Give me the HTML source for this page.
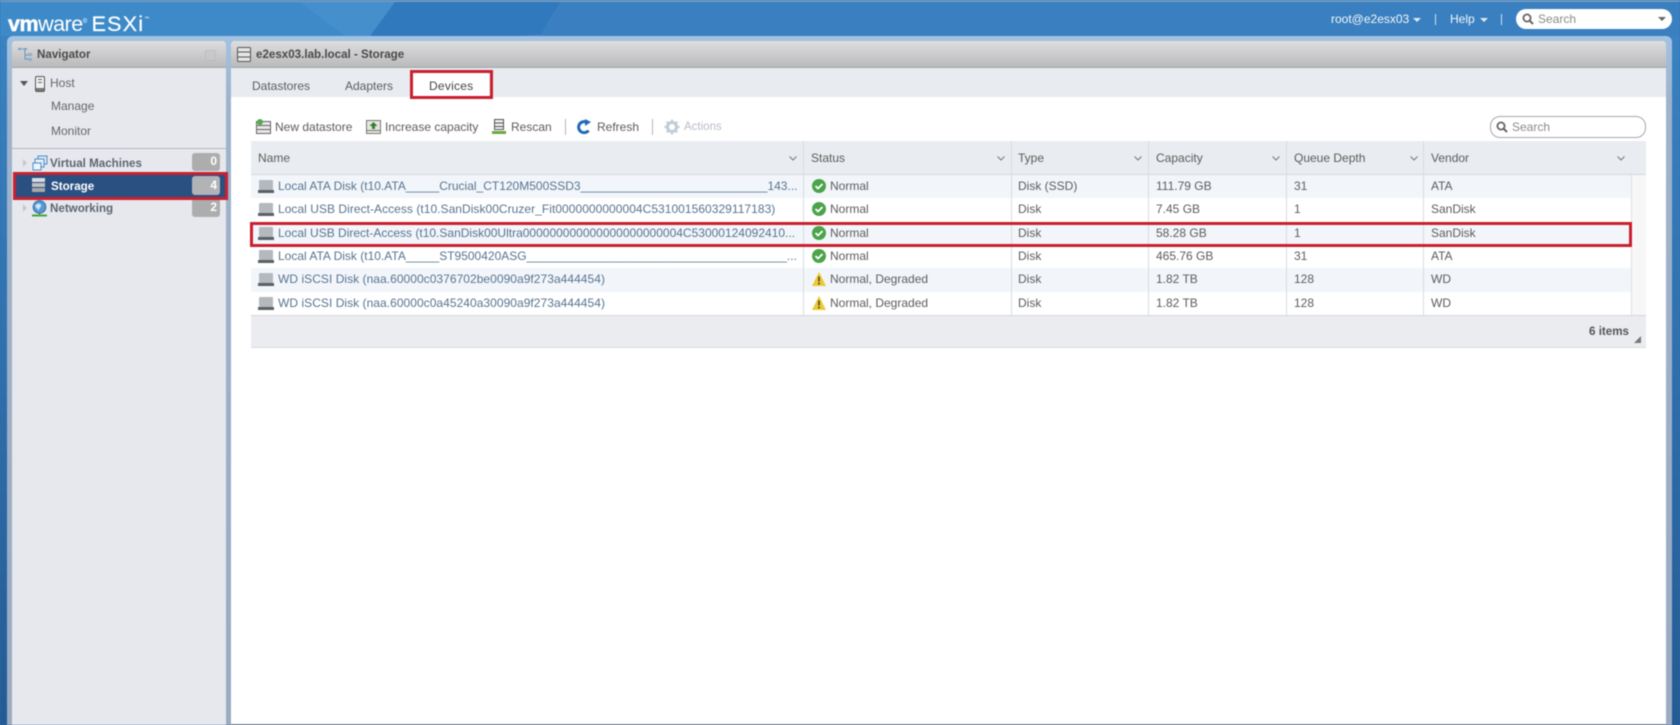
<!DOCTYPE html>
<html lang="en">
<head>
<meta charset="utf-8">
<title>e2esx03.lab.local - Storage</title>
<style>
html,body{margin:0;padding:0;width:1680px;height:725px;overflow:hidden;background:#2f6ca8}
#r{position:relative;width:1680px;height:725px;overflow:hidden;font-family:"Liberation Sans",Arial,sans-serif;font-size:12px;color:#5c5c5c;filter:blur(.4px)}
.a{position:absolute}
.t{position:absolute;white-space:nowrap;line-height:14px;height:14px}
.b{font-weight:bold;font-size:11.6px}
.n{color:#587491}
.s{letter-spacing:.04px}
.rw{position:absolute;left:251px;width:1380px;height:23.33px}
.vs{position:absolute;width:1px;background:#d8dce2}
svg{position:absolute;overflow:visible}
.red{position:absolute;border:3px solid #c9202f;box-sizing:border-box}
.bd{position:absolute;left:192px;width:28px;background:#adadad;border-radius:3px;color:#fff;font-weight:bold;text-align:right;box-sizing:border-box;padding-right:3px}
</style>
</head>
<body>
<div id="r">
<!-- top bar -->
<div class="a" style="left:0;top:0;width:1680px;height:725px;background:linear-gradient(#3a82c2 0,#3a82c2 40px,#245b94 100%)"></div>
<div class="a" style="left:0;top:0;width:1680px;height:2px;background:#6f9cc4"></div>
<svg style="left:0;top:2px" width="1680" height="34">
<polygon points="0,0 300,0 380,34 0,34" fill="#3e8ac9"/>
<polygon points="300,0 395,0 370,34 345,34" fill="#468fcd"/>
<polygon points="395,0 900,0 520,34 370,34" fill="#3079bd"/>
<polygon points="560,0 1680,0 1680,34 540,34" fill="#3a80c0"/>
</svg>
<div class="a" style="left:7px;top:36px;width:1665px;height:689px;background:linear-gradient(#a3c3e2 0,#9fb4cc 60px,#9aabc2 100%);border-radius:6px 6px 0 0"></div>
<!-- logo -->
<div class="t" style="left:8px;top:7px;height:24px;line-height:24px;font-size:21.500px;color:#fff;letter-spacing:-.5px"><span style="font-weight:bold;-webkit-text-stroke:.5px #fff">vm</span><span style="font-weight:normal">ware</span><span style="font-size:6px;vertical-align:8px">®</span><span style="font-size:21.500px;letter-spacing:1.200px;margin-left:5px;-webkit-text-stroke:.2px #fff">ESXi</span><span style="font-size:5px;vertical-align:11px">™</span></div>
<!-- top right -->
<div class="t" style="left:1331px;top:12px;color:#f2f6fa">root@e2esx03</div>
<svg style="left:1413px;top:18px" width="8" height="5"><path d="M0 0h8L4 4z" fill="#dfe9f3"/></svg>
<div class="a" style="left:1435px;top:14px;width:1px;height:11px;background:#cfe0f0"></div>
<div class="t" style="left:1450px;top:12px;color:#f2f6fa">Help</div>
<svg style="left:1480px;top:18px" width="8" height="5"><path d="M0 0h8L4 4z" fill="#dfe9f3"/></svg>
<div class="a" style="left:1501px;top:14px;width:1px;height:11px;background:#cfe0f0"></div>
<div class="a" style="left:1516px;top:9px;width:156px;height:20px;background:#fff;border-radius:10px"></div>
<svg style="left:1522px;top:13px" width="12" height="12"><circle cx="5" cy="5" r="3.6" fill="none" stroke="#666" stroke-width="1.8"/><path d="M7.5 7.5L11 11" stroke="#666" stroke-width="2"/></svg>
<div class="t" style="left:1538px;top:12px;color:#8a8a8a">Search</div>
<svg style="left:1658px;top:17px" width="8" height="5"><path d="M0 0h8L4 4z" fill="#666"/></svg>

<!-- navigator -->
<div class="a" style="left:12px;top:41px;width:214px;height:684px;background:#e6e8ee;border-radius:4px 4px 0 0"></div>
<div class="a" style="left:12px;top:41px;width:214px;height:27px;background:linear-gradient(#dedede,#b9babc);border-radius:4px 4px 0 0;border-bottom:1px solid #a5a7aa;box-sizing:border-box"></div>
<svg style="left:17px;top:47px" width="16" height="16"><path d="M1 1h4v2H1zM6 1h4v2H6z" fill="#7ea4c8"/><path d="M8 3v9h3M8 8h3" stroke="#6a93b8" fill="none"/><rect x="11" y="6" width="4" height="3" fill="#8fb0cf"/><rect x="11" y="11" width="4" height="3" fill="#8fb0cf"/></svg>
<div class="t b" style="left:37px;top:48px;color:#4a4a4a">Navigator</div>
<div class="a" style="left:205px;top:50px;width:9px;height:9px;border:1px solid #b8b8b8;background:#c8c8c8;opacity:.7"></div>
<svg style="left:20px;top:81px" width="8" height="5"><path d="M0 0h8L4 5z" fill="#555"/></svg>
<svg style="left:35px;top:76px" width="10" height="16"><rect x=".5" y=".5" width="9" height="15" rx="1.5" fill="#eef0f2" stroke="#555"/><rect x="3" y="3" width="4" height="1" fill="#666"/><rect x="3" y="6" width="4" height="1" fill="#666"/><rect x="1" y="12" width="8" height="3" fill="#777"/></svg>
<div class="t" style="left:50px;top:76px;color:#666">Host</div>
<div class="t" style="left:51px;top:99px;color:#666">Manage</div>
<div class="t" style="left:51px;top:124px;color:#666">Monitor</div>
<div class="a" style="left:12px;top:148px;width:214px;height:1px;background:#b3b6ba"></div>
<svg style="left:23px;top:159px" width="5" height="8"><path d="M0 0l4 4-4 4z" fill="#c5c8cc"/></svg>
<svg style="left:32px;top:155px" width="16" height="16"><rect x="6" y="1" width="9" height="8" fill="#dbe9f5" stroke="#4b8cc4"/><rect x="3" y="4" width="9" height="8" fill="#e5f0f9" stroke="#4b8cc4"/><rect x="1" y="8" width="8" height="7" fill="#eef5fb" stroke="#4b8cc4"/></svg>
<div class="t b" style="left:50px;top:157px;color:#5d6670">Virtual Machines</div>
<div class="bd" style="top:153px;height:18px;line-height:17px">0</div>
<div class="a" style="left:14px;top:175px;width:212px;height:22px;background:#2a5082"></div>
<svg style="left:32px;top:178px" width="13" height="15"><rect width="13" height="4" fill="#dcdcdc"/><rect y="5" width="13" height="4" fill="#c0c0c0"/><rect y="10" width="13" height="4" fill="#a8a8a8"/></svg>
<div class="t b" style="left:51px;top:180px;color:#fff">Storage</div>
<div class="bd" style="top:176px;height:19px;line-height:19px;background:#b1b3b6">4</div>
<svg style="left:23px;top:204px" width="5" height="8"><path d="M0 0l4 4-4 4z" fill="#c5c8cc"/></svg>
<svg style="left:31px;top:200px" width="17" height="17"><circle cx="8.5" cy="7" r="6.3" fill="#5a9ad4" stroke="#2a6aa8"/><path d="M4 6c2-3 5-3 6-1s-3 3-2 6" fill="#cfe4f5"/><path d="M8.5 13v2" stroke="#555"/><rect x="1" y="14.5" width="15" height="2" fill="#47a53a"/></svg>
<div class="t b" style="left:50px;top:202px;color:#5d6670">Networking</div>
<div class="bd" style="top:198px;height:19px;line-height:19px">2</div>

<!-- main panel -->
<div class="a" style="left:231px;top:41px;width:1435px;height:683px;background:#fff;border-radius:4px 4px 0 0"></div>
<div class="a" style="left:231px;top:724px;width:1435px;height:1px;background:#8e8e8e"></div>
<div class="a" style="left:231px;top:41px;width:1435px;height:27px;background:linear-gradient(#dedede,#b9babc);border-radius:4px 4px 0 0;border-bottom:1px solid #a5a7aa;box-sizing:border-box"></div>
<svg style="left:237px;top:47px" width="14" height="15"><rect x=".5" y=".5" width="13" height="14" rx="1" fill="#e4e4e4" stroke="#555"/><path d="M1 5h12M1 10h12" stroke="#555"/></svg>
<div class="t b" style="left:256px;top:48px;color:#4a4a4a">e2esx03.lab.local - Storage</div>
<div class="a" style="left:231px;top:68px;width:1435px;height:29px;background:#e8ecf1"></div>
<div class="a" style="left:412px;top:73px;width:77px;height:24px;background:#fff;border-radius:3px 3px 0 0"></div>
<div class="t" style="left:252px;top:79px">Datastores</div>
<div class="t" style="left:345px;top:79px">Adapters</div>
<div class="t" style="left:429px;top:79px;color:#444;letter-spacing:.25px">Devices</div>
<div class="red" style="left:410px;top:70px;width:83px;height:29px"></div>

<!-- toolbar -->
<svg style="left:256px;top:119px" width="16" height="15"><rect x=".5" y="2.5" width="14" height="12" fill="#e8e8e8" stroke="#666"/><path d="M1 6.5h13M1 10.500h13" stroke="#666"/><circle cx="4" cy="3" r="3" fill="#4fae45"/></svg>
<div class="t" style="left:275px;top:120px">New datastore</div>
<svg style="left:366px;top:120px" width="15" height="14"><rect x=".5" y=".5" width="14" height="13" fill="#e2e8de" stroke="#777"/><path d="M7.500 2l4 4H9v3H6V6H3.500z" fill="#3d7a34"/><path d="M1 10.500h13" stroke="#777"/></svg>
<div class="t" style="left:385px;top:120px">Increase capacity</div>
<svg style="left:492px;top:119px" width="14" height="16"><rect x="2.500" y=".5" width="9" height="10" fill="#eee" stroke="#555"/><path d="M3 4h8M3 7.500h8" stroke="#555"/><rect y="12" width="14" height="3" fill="#6aa842"/></svg>
<div class="t" style="left:511px;top:120px">Rescan</div>
<div class="a" style="left:565px;top:119px;width:1px;height:16px;background:#b5b5b5"></div>
<svg style="left:577px;top:119px" width="15" height="16"><path d="M11.500 11.500A5.500 5.500 0 1 1 9 3" fill="none" stroke="#1f6bb5" stroke-width="3"/><path d="M8 0l6 3-6 4z" fill="#1f6bb5"/></svg>
<div class="t" style="left:597px;top:120px">Refresh</div>
<div class="a" style="left:652px;top:119px;width:1px;height:16px;background:#b5b5b5"></div>
<svg style="left:664px;top:119px" width="16" height="16"><circle cx="8" cy="8" r="4.500" fill="none" stroke="#c3ccd6" stroke-width="3"/><path d="M8 .5v3M8 12.500v3M.5 8h3M12.500 8h3M2.700 2.700l2 2M11.300 11.300l2 2M2.700 13.300l2-2M11.300 4.700l2-2" stroke="#c3ccd6" stroke-width="2.200"/></svg>
<div class="t" style="left:684px;top:120px;color:#b8bdc4;font-size:11.500px">Actions</div>
<div class="a" style="left:1490px;top:116px;width:156px;height:22px;border:1px solid #a8a8a8;border-radius:10px;box-sizing:border-box;background:#fff"></div>
<svg style="left:1496px;top:121px" width="12" height="12"><circle cx="5" cy="5" r="3.600" fill="none" stroke="#666" stroke-width="1.800"/><path d="M7.500 7.500L11 11" stroke="#666" stroke-width="2"/></svg>
<div class="t" style="left:1512px;top:120px;color:#8a8a8a">Search</div>

<!-- grid -->
<div class="a" style="left:251px;top:141px;width:1395px;height:34px;background:#e9ecf0;border-bottom:1px solid #d5d8dd;box-sizing:border-box"></div>
<div class="a" style="left:251px;top:315px;width:1395px;height:33px;background:#eaecf0;border-top:1px solid #d5d8dd;border-bottom:1px solid #dcdcdc;box-sizing:border-box"></div>
<div class="rw" style="top:175px;background:#f2f6fa"></div>
<div class="rw" style="top:221.660px;background:#f2f6fa"></div>
<div class="rw" style="top:268.320px;background:#f2f6fa"></div>
<div class="a" style="left:1631px;top:175px;width:15px;height:140px;background:#f7f7f8;border-left:1px solid #e0e0e0;box-sizing:border-box"></div>
<div class="vs" style="left:803px;top:141px;height:174px"></div>
<div class="vs" style="left:1011px;top:141px;height:174px"></div>
<div class="vs" style="left:1148px;top:141px;height:174px"></div>
<div class="vs" style="left:1286px;top:141px;height:174px"></div>
<div class="vs" style="left:1423px;top:141px;height:174px"></div>

<div class="t" style="left:258px;top:151px">Name</div>
<div class="t" style="left:811px;top:151px">Status</div>
<div class="t" style="left:1018px;top:151px">Type</div>
<div class="t" style="left:1156px;top:151px">Capacity</div>
<div class="t" style="left:1294px;top:151px">Queue Depth</div>
<div class="t" style="left:1431px;top:151px">Vendor</div>
<svg style="left:789px;top:156px" width="8" height="5"><path d="M.5.5L4 4 7.500.5" fill="none" stroke="#777"/></svg>
<svg style="left:997px;top:156px" width="8" height="5"><path d="M.5.5L4 4 7.500.5" fill="none" stroke="#777"/></svg>
<svg style="left:1134px;top:156px" width="8" height="5"><path d="M.5.5L4 4 7.500.5" fill="none" stroke="#777"/></svg>
<svg style="left:1272px;top:156px" width="8" height="5"><path d="M.5.5L4 4 7.500.5" fill="none" stroke="#777"/></svg>
<svg style="left:1410px;top:156px" width="8" height="5"><path d="M.5.5L4 4 7.500.5" fill="none" stroke="#777"/></svg>
<svg style="left:1617px;top:156px" width="8" height="5"><path d="M.5.5L4 4 7.500.5" fill="none" stroke="#777"/></svg>

<!-- disk icons -->
<svg style="left:258px;top:179px" width="16" height="15"><rect x="1" y="1" width="14" height="10" rx="1" fill="#b4b9be"/><rect x="0" y="11" width="16" height="3" fill="#5b6066"/></svg>
<svg style="left:258px;top:202px" width="16" height="15"><rect x="1" y="1" width="14" height="10" rx="1" fill="#b4b9be"/><rect x="0" y="11" width="16" height="3" fill="#5b6066"/></svg>
<svg style="left:258px;top:226px" width="16" height="15"><rect x="1" y="1" width="14" height="10" rx="1" fill="#b4b9be"/><rect x="0" y="11" width="16" height="3" fill="#5b6066"/></svg>
<svg style="left:258px;top:249px" width="16" height="15"><rect x="1" y="1" width="14" height="10" rx="1" fill="#b4b9be"/><rect x="0" y="11" width="16" height="3" fill="#5b6066"/></svg>
<svg style="left:258px;top:272px" width="16" height="15"><rect x="1" y="1" width="14" height="10" rx="1" fill="#b4b9be"/><rect x="0" y="11" width="16" height="3" fill="#5b6066"/></svg>
<svg style="left:258px;top:296px" width="16" height="15"><rect x="1" y="1" width="14" height="10" rx="1" fill="#b4b9be"/><rect x="0" y="11" width="16" height="3" fill="#5b6066"/></svg>

<!-- names -->
<div class="t n" style="left:278px;top:179px">Local ATA Disk (t10.ATA_____Crucial_CT120M500SSD3____________________________143...</div>
<div class="t n s" style="left:278px;top:202px">Local USB Direct-Access (t10.SanDisk00Cruzer_Fit0000000000004C531001560329117183)</div>
<div class="t n" style="left:278px;top:226px">Local USB Direct-Access (t10.SanDisk00Ultra000000000000000000000004C53000124092410...</div>
<div class="t n" style="left:278px;top:249px">Local ATA Disk (t10.ATA_____ST9500420ASG_______________________________________...</div>
<div class="t n s" style="left:278px;top:272px">WD iSCSI Disk (naa.60000c0376702be0090a9f273a444454)</div>
<div class="t n s" style="left:278px;top:296px">WD iSCSI Disk (naa.60000c0a45240a30090a9f273a444454)</div>

<!-- status icons -->
<svg style="left:812px;top:179px" width="14" height="14"><circle cx="7" cy="7" r="7" fill="#4ba34a"/><path d="M3.500 7l2.500 2.500 4.500-4.500" fill="none" stroke="#fff" stroke-width="1.800"/></svg>
<svg style="left:812px;top:202px" width="14" height="14"><circle cx="7" cy="7" r="7" fill="#4ba34a"/><path d="M3.500 7l2.500 2.500 4.500-4.500" fill="none" stroke="#fff" stroke-width="1.800"/></svg>
<svg style="left:812px;top:226px" width="14" height="14"><circle cx="7" cy="7" r="7" fill="#4ba34a"/><path d="M3.500 7l2.500 2.500 4.500-4.500" fill="none" stroke="#fff" stroke-width="1.800"/></svg>
<svg style="left:812px;top:249px" width="14" height="14"><circle cx="7" cy="7" r="7" fill="#4ba34a"/><path d="M3.500 7l2.500 2.500 4.500-4.500" fill="none" stroke="#fff" stroke-width="1.800"/></svg>
<svg style="left:812px;top:272px" width="14" height="14"><path d="M7 0l7 14H0z" fill="#ecc935"/><path d="M7 4.500v5M7 10.500v2" stroke="#4a4020" stroke-width="1.500"/></svg>
<svg style="left:812px;top:296px" width="14" height="14"><path d="M7 0l7 14H0z" fill="#ecc935"/><path d="M7 4.500v5M7 10.500v2" stroke="#4a4020" stroke-width="1.500"/></svg>

<div class="t" style="left:830px;top:179px">Normal</div>
<div class="t" style="left:830px;top:202px">Normal</div>
<div class="t" style="left:830px;top:226px">Normal</div>
<div class="t" style="left:830px;top:249px">Normal</div>
<div class="t" style="left:830px;top:272px">Normal, Degraded</div>
<div class="t" style="left:830px;top:296px">Normal, Degraded</div>

<div class="t" style="left:1018px;top:179px">Disk (SSD)</div>
<div class="t" style="left:1018px;top:202px">Disk</div>
<div class="t" style="left:1018px;top:226px">Disk</div>
<div class="t" style="left:1018px;top:249px">Disk</div>
<div class="t" style="left:1018px;top:272px">Disk</div>
<div class="t" style="left:1018px;top:296px">Disk</div>

<div class="t" style="left:1156px;top:179px">111.79 GB</div>
<div class="t" style="left:1156px;top:202px">7.45 GB</div>
<div class="t" style="left:1156px;top:226px">58.28 GB</div>
<div class="t" style="left:1156px;top:249px">465.76 GB</div>
<div class="t" style="left:1156px;top:272px">1.82 TB</div>
<div class="t" style="left:1156px;top:296px">1.82 TB</div>

<div class="t" style="left:1294px;top:179px">31</div>
<div class="t" style="left:1294px;top:202px">1</div>
<div class="t" style="left:1294px;top:226px">1</div>
<div class="t" style="left:1294px;top:249px">31</div>
<div class="t" style="left:1294px;top:272px">128</div>
<div class="t" style="left:1294px;top:296px">128</div>

<div class="t" style="left:1431px;top:179px">ATA</div>
<div class="t" style="left:1431px;top:202px">SanDisk</div>
<div class="t" style="left:1431px;top:226px">SanDisk</div>
<div class="t" style="left:1431px;top:249px">ATA</div>
<div class="t" style="left:1431px;top:272px">WD</div>
<div class="t" style="left:1431px;top:296px">WD</div>

<div class="t b" style="right:51px;top:325px;color:#555">6 items</div>
<svg style="left:1634px;top:336px" width="8" height="8"><path d="M7 0v7H0z" fill="#777"/></svg>

<!-- red highlights -->
<div class="red" style="left:13px;top:172px;width:215px;height:28px"></div>
<div class="red" style="left:250px;top:222px;width:1382px;height:25px"></div>
</div>
</body>
</html>
